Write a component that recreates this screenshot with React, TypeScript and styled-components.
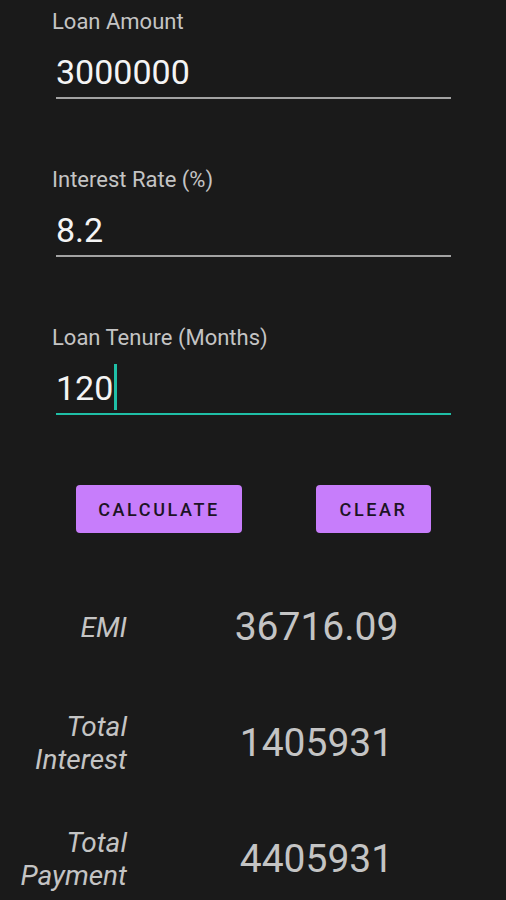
import styled, { createGlobalStyle } from "styled-components";

const GlobalStyle = createGlobalStyle`
  html, body {
    margin: 0;
    padding: 0;
    background: #1a1a1a;
    font-family: Roboto, "Noto Sans", sans-serif;
  }
`;

const fields = [
  { label: "Loan Amount", value: "3000000", focused: false },
  { label: "Interest Rate (%)", value: "8.2", focused: false },
  { label: "Loan Tenure (Months)", value: "120", focused: true },
];

const results = [
  { label: ["EMI"], value: "36716.09" },
  { label: ["Total", "Interest"], value: "1405931" },
  { label: ["Total", "Payment"], value: "4405931" },
];

const App = () => {
  return (
    <>
      <GlobalStyle />
      <Screen>
        <Form>
          {fields.map((f) => (
            <Field key={f.label}>
              <Label>{f.label}</Label>
              <Input focused={f.focused}>
                {f.value}
                {f.focused && <Cursor />}
              </Input>
            </Field>
          ))}
        </Form>

        <Buttons>
          <Button wide>CALCULATE</Button>
          <Button>CLEAR</Button>
        </Buttons>

        <Results>
          {results.map((r) => (
            <ResultRow key={r.value}>
              <ResultLabel>
                {r.label.map((line) => (
                  <span key={line}>{line}</span>
                ))}
              </ResultLabel>
              <ResultValue>{r.value}</ResultValue>
            </ResultRow>
          ))}
        </Results>
      </Screen>
    </>
  );
};
export default App;

const Screen = styled.div`
  width: 506px;
  height: 900px;
  overflow: hidden;
  background: #1a1a1a;
`;

const Form = styled.div`
  display: flex;
  flex-direction: column;
  gap: 68px;
  padding: 9px 0 0 52px;
`;

const Field = styled.div`
  display: flex;
  flex-direction: column;
`;

const Label = styled.div`
  font-size: 22px;
  line-height: 26px;
  color: #c4c4c4;
`;

const Input = styled.div<{ focused?: boolean }>`
  display: flex;
  align-items: center;
  margin-left: 4px;
  width: 395px;
  height: 64px;
  box-sizing: border-box;
  padding-top: 12px;
  font-size: 34px;
  color: #f4f4f4;
  border-bottom: 2px solid ${({ focused }) => (focused ? "#1fbfa6" : "#a3a3a3")};
`;

const Cursor = styled.span`
  display: inline-block;
  width: 3px;
  height: 46px;
  margin-left: 1px;
  margin-top: -2px;
  background: #1fbfa6;
`;

const Buttons = styled.div`
  display: flex;
  justify-content: space-between;
  padding: 70px 75px 0 76px;
`;

const Button = styled.button<{ wide?: boolean }>`
  width: ${({ wide }) => (wide ? "166px" : "115px")};
  height: 48px;
  border: none;
  border-radius: 4px;
  background: #c77dfb;
  color: #1c1424;
  font-family: Roboto, sans-serif;
  font-weight: 500;
  font-size: 18px;
  letter-spacing: 2.6px;
  padding: 0;
`;

const Results = styled.div`
  display: flex;
  flex-direction: column;
  padding-top: 36px;
`;

const ResultRow = styled.div`
  display: grid;
  grid-template-columns: 127px 1fr;
  align-items: center;
  height: 116px;
`;

const ResultLabel = styled.div`
  display: flex;
  flex-direction: column;
  align-items: flex-end;
  font-style: italic;
  font-size: 28px;
  line-height: 33px;
  color: #c4c4c4;
`;

const ResultValue = styled.div`
  text-align: center;
  font-size: 39px;
  color: #c4c4c4;
`;
